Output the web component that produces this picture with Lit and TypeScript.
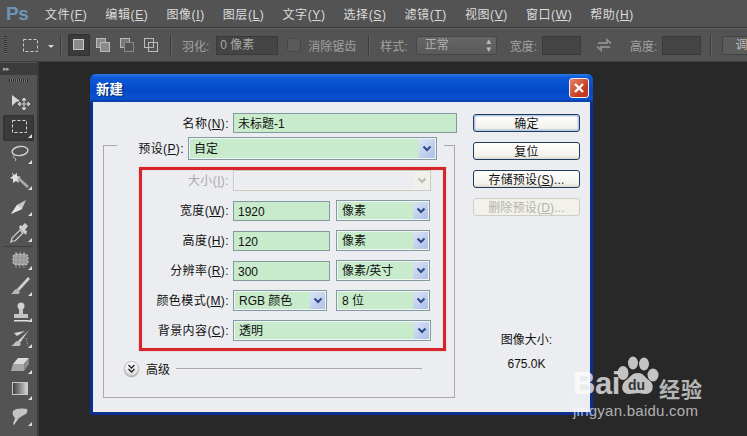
import { LitElement, html, css, svg } from "lit";
import { customElement } from "lit/decorators.js";

const menus: [string, string][] = [["文件", "F"], ["编辑", "E"], ["图像", "I"], ["图层", "L"], ["文字", "Y"], ["选择", "S"], ["滤镜", "T"], ["视图", "V"], ["窗口", "W"], ["帮助", "H"]];

const tools = [
  svg`<path d="M4 3v11l4-4h-0l4-1z" fill="#d8d8d8" transform="translate(0,1)"/><path d="M16 8v10M11 13h10M16 7l-2 2h4zM16 19l-2-2h4zM10 13l2-2v4zM22 13l-2-2v4z" stroke="#d0d0d0" fill="#d0d0d0" stroke-width="1"/>`,
  svg`<rect x="4.5" y="3.5" width="14" height="12" fill="none" stroke="#d8d8d8" stroke-dasharray="3 2"/>`,
  svg`<ellipse cx="12" cy="8" rx="8" ry="4.5" fill="none" stroke="#d0d0d0" stroke-width="1.4" transform="rotate(-8 12 8)"/><path d="M6 12c-2 2 0 3 1 3s1 2 0 3" fill="none" stroke="#c0c0c0"/>`,
  svg`<path d="M4 3l2 3 3-2 0 3 4 1-3 2 1 4-3-2-3 2 0-4-3-1 3-2z" fill="#e0e0e0"/><path d="M10 9l10 9" stroke="#aaa" stroke-width="2.6"/>`,
  svg`<path d="M3 19l6-9 9-5-4 9z" fill="#c6c6c6"/><path d="M3 19l6-9 5 4z" fill="#e4e4e4"/>`,
  svg`<path d="M4 20l-1 1 1-4 8-8 3 3-8 8z" fill="none" stroke="#d4d4d4" stroke-width="1.2"/><path d="M11 7l7 7 1-4 0 0 -2-1 3-4-3-3-3 3-2-1z" fill="#d0d0d0"/>`,
  svg`<rect x="5" y="5" width="15" height="11" rx="3" fill="#9a9a9a" stroke="#d8d8d8" stroke-dasharray="2 1.5"/><path d="M8 2v18M12 2v18M16 2v18" stroke="#cfcfcf" stroke-dasharray="2 2" opacity=".6" transform="translate(0,1) scale(1,.9)"/>`,
  svg`<path d="M20 2L9 14l2 2L22 4z" fill="#cfcfcf"/><path d="M9 14c-3 0-3 3-6 5h7c2 0 2-3 1-3z" fill="#b8b8b8"/>`,
  svg`<circle cx="13" cy="5" r="3.5" fill="#d0d0d0"/><path d="M11 8h4v5h5v4H6v-4h5z" fill="#c4c4c4"/><rect x="6" y="19" width="15" height="1.5" fill="#e0e0e0"/>`,
  svg`<path d="M6 6l11-2-8 5z" fill="#d6d6d6"/><path d="M21 3L10 14l2 2z" fill="#cfcfcf"/><path d="M10 14c-3 0-3 3-7 5h8c2 0 2-3 1-3z" fill="#c0c0c0"/><path d="M18 11l2 8" stroke="#bbb" stroke-dasharray="1 1.5"/>`,
  svg`<path d="M10 5h11l-5 6H5z" fill="#dcdcdc"/><path d="M5 11h11v7H3z" fill="#a6a6a6"/><path d="M16 11l5-6v6l-5 7z" fill="#8c8c8c"/>`,
  svg`<defs><linearGradient id="g1"><stop offset="0" stop-color="#3a3a3a"/><stop offset="1" stop-color="#d8d8d8"/></linearGradient></defs><rect x="4.5" y="3.5" width="15" height="12" fill="url(#g1)" stroke="#c8c8c8"/>`,
  svg`<path d="M5 6c2-3 10-3 14-2 1 3 0 5-3 6l-5 3-5 7-1-1 2-6c-2-2-3-4-2-7z" fill="#c4c4c4"/>`,
];

const chev = svg`<svg width="10" height="8" viewBox="0 0 10 8"><path d="M1.500 1.500L5 5l3.500-3.500" fill="none" stroke="currentColor" stroke-width="2"/></svg>`;

@customElement("app-root")
export class AppRoot extends LitElement {
  static styles = css`
    :host { display: block; width: 747px; height: 436px; position: relative; overflow: hidden; background: #282828;
      font: 12px "Liberation Sans", "Noto Sans CJK SC", sans-serif; color: #111; }
    u { text-underline-offset: 1px; }
    .menubar { height: 28px; box-sizing: border-box; background: #535353; border-bottom: 1px solid #3a3a3a; display: flex; align-items: center; padding-left: 6px; color: #dcdcdc; letter-spacing: .6px; }
    .ps { font: bold 19px "Liberation Sans", sans-serif; color: #6f93b5; width: 39px; letter-spacing: -.5px; flex: none; }
    .menus { display: flex; gap: 18px; white-space: nowrap; }
    .options { height: 34px; box-sizing: border-box; background: #535353; border-top: 1px solid #616161; border-bottom: 1px solid #3e3e3e; display: flex; align-items: center; color: #a2a2a2; overflow: hidden; }
    .options > * { flex: none; }
    .grip { width: 3px; height: 18px; margin-left: 4px; background: repeating-linear-gradient(#222 0 1px, #6a6a6a 1px 2px); opacity: .7; }
    .sep { width: 1px; height: 20px; background: #3a3a3a; box-shadow: 1px 0 #626262; }
    .opt-marq { margin: 0 0 0 16px; display: flex; }
    .caret { width: 0; height: 0; border: 3px solid transparent; border-top: 3px solid #ddd; margin: 6px 6px 0 10px; }
    .modes { display: flex; align-items: center; margin: 0 6px 0 7px; }
    .mode { width: 22px; height: 22px; display: flex; align-items: center; justify-content: center; margin-right: 2px; }
    .mode.on { background: #3b3b3b; border-radius: 2px; box-shadow: inset 0 0 2px #222; }
    .olabel { white-space: nowrap; }
    .oinput { height: 19px; box-sizing: border-box; background: #444; border: 1px solid #3a3a3a; color: #a8a8a8; line-height: 17px; padding-left: 3px; }
    .check { width: 12px; height: 12px; background: #5a5a5a; border: 1px solid #484848; border-radius: 3px; margin: 0 7px 0 9px; }
    .oselect { width: 81px; height: 19px; box-sizing: border-box; background: linear-gradient(#666, #5a5a5a); border: 1px solid #474747; border-radius: 3px; color: #b0b0b0; padding-left: 8px; line-height: 17px; display: flex; justify-content: space-between; }
    .spin { font-size: 8px; line-height: 8px; width: 14px; text-align: center; color: #bbb; padding-top: 1px; }
    .obtn { width: 40px; height: 19px; box-sizing: border-box; background: #5c5c5c; border: 1px solid #444; border-radius: 3px; color: #bbb; padding-left: 12px; line-height: 17px; margin-left: 11px; }

    .work { display: flex; height: 374px; }
    .sidebar { width: 37px; background: #535353; border-right: 2px solid #3a3a3a; flex: none; padding-top: 1px; }
    .tab { height: 12px; background: #3c3c3c; color: #aaa; font-size: 7px; line-height: 12px; padding-left: 3px; letter-spacing: -1px; }
    .tgrip { height: 3px; margin: 4px 9px 6px; background: repeating-linear-gradient(90deg, #2a2a2a 0 1px, #777 1px 2px); }
    .tools { display: flex; flex-direction: column; padding-top: 1px; }
    .tool { height: 26px; width: 31px; margin-left: 3px; position: relative; display: flex; align-items: center; padding-left: 5px; box-sizing: border-box; }
    .tool.on { background: #3a3a3a; border-radius: 2px; box-shadow: inset 0 0 2px #222; }
    .tool.more::after { content: ""; position: absolute; right: 2px; bottom: 3px; border: 2px solid transparent; border-right-color: #ddd; border-bottom-color: #ddd; }
    .tdiv { height: 1px; background: #3d3d3d; margin: 1px 4px 0; }

    .dialog { position: absolute; left: 90px; top: 74px; width: 503px; height: 341px; box-sizing: border-box; border-radius: 5px 5px 0 0; background: #0a2a88; border: solid #0b2f8e; border-width: 0 3px 3px; display: flex; flex-direction: column; }
    .title { height: 28px; margin: 0 -3px; flex: none; border-radius: 6px 6px 0 0; background: linear-gradient(#2a7be6 0, #0f5ad8 12%, #0448c8 60%, #0a52d4 85%, #0a3ea8 100%); display: flex; align-items: center; justify-content: space-between; padding: 0 4px 0 6px; color: #fff; font-weight: bold; font-size: 13.5px; text-shadow: 1px 1px 1px #0a2a70; }
    .close { width: 20px; height: 20px; box-sizing: border-box; border: 1px solid #f0f0f0; border-radius: 3px; background: linear-gradient(135deg, #e8836a, #c43a1c 70%); display: flex; align-items: center; justify-content: center; }
    .body { flex: 1; background: #ecedf0; display: flex; position: relative; padding-left: 0; }
    .form { width: 367px; box-sizing: border-box; padding-top: 11px; flex: none; }
    .group { position: absolute; left: 10px; top: 43px; width: 352px; height: 253px; box-sizing: border-box; border: 1px solid #a9a9a5; border-top: 0; }
    .group::before { content: ""; position: absolute; left: -1px; top: 0; width: 14px; height: 1px; background: #a9a9a5; }
    .group::after { content: ""; position: absolute; right: -1px; top: 0; width: 11px; height: 1px; background: #a9a9a5; }
    .redbox { position: absolute; left: 46px; top: 65px; width: 307px; height: 184px; box-sizing: border-box; border: 3px solid #d4262b; box-shadow: 0 0 1px #f08a8a, inset 0 0 1px #f08a8a; pointer-events: none; }
    .row { display: flex; align-items: center; gap: 4px; position: relative; }
    .lbl { width: 136px; text-align: right; white-space: nowrap; flex: none; line-height: 14px; letter-spacing: .4px; padding-top: 1px; }
    .lbl.dis { color: #aaa; }
    .lbl.short { width: 91px; }
    .preset { margin-top: 4px; }
    .rows { display: grid; grid-auto-rows: 21px; row-gap: 9px; margin-top: 10px; position: relative; }
    .field { height: 20px; box-sizing: border-box; background: #c7ebcb; border: 1px solid #8199a1; padding: 1px 0 0 4px; line-height: 18px; color: #111; white-space: nowrap; }
    .sel { height: 21px; box-sizing: border-box; background: #c7ebcb; border: 1px solid #8199a1; outline: 1px solid #f4f4f4; outline-offset: -2px; padding-left: 5px; line-height: 20px; display: flex; justify-content: space-between; white-space: nowrap; }
    .sel .arrow { width: 15px; margin: 1px; background: linear-gradient(135deg, #dbe5f8, #aebfe6); color: #2c4a86; display: flex; align-items: center; justify-content: center; border-radius: 1px; }
    .sel.dis { background: #ecedf0; border-color: #c9c8bd; }
    .sel.dis .arrow { background: #f1f0e9; color: #bcbcb4; }
    .advanced { display: flex; align-items: center; margin: 19px 0 0 31px; height: 16px; }
    .circle { width: 15px; height: 15px; box-sizing: border-box; border-radius: 50%; background: linear-gradient(#fff, #ddd); border: 1px solid #bbb; box-shadow: 0 1px 1px #999; display: flex; align-items: center; justify-content: center; color: #222; margin-right: 7px; flex: none; }
    .advline { width: 246px; height: 1px; background: #a9a9a5; margin-left: 6px; }
    .side { width: 107px; margin-left: 13px; padding-top: 12px; display: flex; flex-direction: column; gap: 10px; flex: none; }
    .btn { height: 18px; box-sizing: border-box; border: 1px solid #1d3c5c; border-radius: 3px; background: linear-gradient(#fff, #f3f2ec 80%, #dcd8cc); text-align: center; line-height: 18px; white-space: nowrap; letter-spacing: .2px; }
    .btn.def { box-shadow: inset 0 0 0 1.5px #b5c8ea; }
    .btn.dis { border-color: #cfcec4; background: #f2f1ea; color: #b4b4ac; }
    .size { margin-top: 107px; text-align: center; line-height: 14px; }
    .size div + div { margin-top: 10px; }

    .mark { position: absolute; left: 573px; top: 356px; width: 134px; height: 64px; color: rgba(255, 255, 255, .72); pointer-events: none; }
    .bai { position: absolute; left: 0; top: 11px; font: bold 31px/34px "Liberation Sans", sans-serif; letter-spacing: -.5px; }
    .paw { position: absolute; left: 43px; top: 0; }
    .jing { position: absolute; left: 86px; top: 19px; font: bold 21px/26px "Noto Sans CJK SC", sans-serif; letter-spacing: 1px; color: rgba(255, 255, 255, .68); }
    .url { position: absolute; left: 0; top: 46px; font: 15px/18px "Liberation Sans", sans-serif; letter-spacing: .25px; color: rgba(255, 255, 255, .65); }
  `;

  private ul(t: string, k: string, tail = "") { return html`${t}(<u>${k}</u>)${tail}`; }
  private sel(text: string, w: number, dis = false) {
    return html`<div class="sel ${dis ? "dis" : ""}" style="width:${w}px"><span>${text}</span><span class="arrow">${chev}</span></div>`;
  }

  render() {
    const rows: [string, string | null, string, any][] = [
      ["宽度", "W", "1920", this.sel("像素", 94)],
      ["高度", "H", "120", this.sel("像素", 94)],
      ["分辨率", "R", "300", this.sel("像素/英寸", 94)],
    ];
    return html`
      <div class="menubar"><div class="ps">Ps</div><div class="menus">${menus.map(([t, k]) => html`<span>${this.ul(t, k)}</span>`)}</div></div>
      <div class="options">
        <div class="grip"></div>
        <div class="opt-marq"><svg width="15" height="13"><rect x=".5" y=".5" width="14" height="12" fill="none" stroke="#ccc" stroke-dasharray="3 2"/></svg><div class="caret"></div></div>
        <div class="sep"></div>
        <div class="modes">
          <div class="mode on"><svg width="12" height="12"><rect x=".5" y=".5" width="10" height="10" fill="#8a8a8a" stroke="#c8c8c8"/></svg></div>
          <div class="mode"><svg width="15" height="14"><rect x=".5" y=".5" width="9" height="9" fill="#8a8a8a" stroke="#bbb"/><rect x="4.5" y="4.5" width="9" height="9" fill="#8a8a8a" stroke="#bbb"/></svg></div>
          <div class="mode"><svg width="15" height="14"><rect x=".5" y=".5" width="9" height="9" fill="#777" stroke="#bbb"/><rect x="4.5" y="4.5" width="9" height="9" fill="#535353" stroke="#888"/></svg></div>
          <div class="mode"><svg width="15" height="14" fill="none" stroke="#bbb"><rect x=".5" y=".5" width="9" height="9"/><rect x="4.5" y="4.5" width="9" height="9"/></svg></div>
        </div>
        <div class="sep"></div>
        <span class="olabel" style="margin-left:11px">羽化:</span>
        <div class="oinput" style="width:62px;margin-left:7px">0 像素</div>
        <div class="check"></div><span class="olabel">消除锯齿</span>
        <div class="sep" style="margin-left:12px"></div>
        <span class="olabel" style="margin-left:11px">样式:</span>
        <div class="oselect" style="margin-left:8px"><span>正常</span><span class="spin">▲<br />▼</span></div>
        <span class="olabel" style="margin-left:13px">宽度:</span>
        <div class="oinput" style="width:39px;margin-left:5px"></div>
        <svg width="16" height="14" style="margin:0 18px 0 15px"><path d="M2 5h9V2l4 3.500M14 9H5v3L1 8.500" fill="none" stroke="#8a8a8a" stroke-width="2"/></svg>
        <span class="olabel">高度:</span>
        <div class="oinput" style="width:39px;margin:0 9px 0 5px"></div>
        <div class="sep"></div>
        <div class="obtn">调</div>
      </div>
      <div class="work">
        <div class="sidebar">
          <div class="tab">▸▸</div>
          <div class="tgrip"></div>
          <div class="tools">
            ${tools.map((t, i) => html`
              ${i === 6 ? html`<div class="tdiv"></div>` : ""}
              <div class="tool ${i === 1 ? "on" : ""} ${i ? "more" : ""}"><svg width="24" height="22" viewBox="0 0 24 22">${t}</svg></div>`)}
          </div>
        </div>
      </div>
      <div class="dialog">
        <div class="title"><span>新建</span>
          <div class="close"><svg width="12" height="12"><path d="M2 2l8 8M10 2l-8 8" stroke="#fff" stroke-width="2.4"/></svg></div>
        </div>
        <div class="body">
          <div class="group"></div>
          <div class="form">
            <div class="row"><div class="lbl">${this.ul("名称", "N", ":")}</div><div class="field" style="width:224px">未标题-1</div></div>
            <div class="row preset"><div class="lbl short">${this.ul("预设", "P", ":")}</div>
              <div class="sel" style="width:249px;height:23px;line-height:22px"><span>自定</span><span class="arrow" style="width:16px">${chev}</span></div></div>
            <div class="rows">
              <div class="row"><div class="lbl dis">${this.ul("大小", "I", ":")}</div>${this.sel("", 198, true)}</div>
              ${rows.map(([t, k, v, s]) => html`<div class="row"><div class="lbl">${this.ul(t, k!, ":")}</div><div class="field" style="width:97px;margin-right:2px">${v}</div>${s}</div>`)}
              <div class="row"><div class="lbl">${this.ul("颜色模式", "M", ":")}</div>${this.sel("RGB 颜色", 94)}<div style="width:1px"></div>${this.sel("8 位", 94)}</div>
              <div class="row"><div class="lbl">${this.ul("背景内容", "C", ":")}</div>${this.sel("透明", 198)}</div>
            </div>
            <div class="advanced"><div class="circle"><svg width="9" height="9" viewBox="0 0 9 9" fill="none" stroke="#222" stroke-width="1.300"><path d="M1.500 1L4.500 4 7.500 1M1.500 5L4.500 8 7.500 5"/></svg></div><span>高级</span><div class="advline"></div></div>
          </div>
          <div class="redbox"></div>
          <div class="side">
            <div class="btn def">确定</div>
            <div class="btn">复位</div>
            <div class="btn">${this.ul("存储预设", "S", "...")}</div>
            <div class="btn dis">${this.ul("删除预设", "D", "...")}</div>
            <div class="size"><div>图像大小:</div><div>675.0K</div></div>
          </div>
        </div>
      </div>
      <div class="mark">
        <div class="bai">Bai</div>
        <svg class="paw" width="44" height="44" viewBox="0 0 44 44" fill="currentColor">
          <ellipse cx="7" cy="17" rx="5.500" ry="7"/><ellipse cx="17" cy="7" rx="5" ry="6.500"/><ellipse cx="28" cy="8" rx="5" ry="6.500"/><ellipse cx="37" cy="19" rx="5.500" ry="6.500"/>
          <path d="M22 17c6 0 7 5 12 8 5 4 3 13-4 13-4 0-6-1-8-1s-5 1-9 1c-7 0-9-8-4-13 5-3 6-8 13-8z"/>
          <text x="12" y="34" font-family="Liberation Sans" font-weight="bold" font-size="14" fill="#333">du</text>
        </svg>
        <div class="jing">经验</div>
        <div class="url">jingyan.baidu.com</div>
      </div>
    `;
  }
}
